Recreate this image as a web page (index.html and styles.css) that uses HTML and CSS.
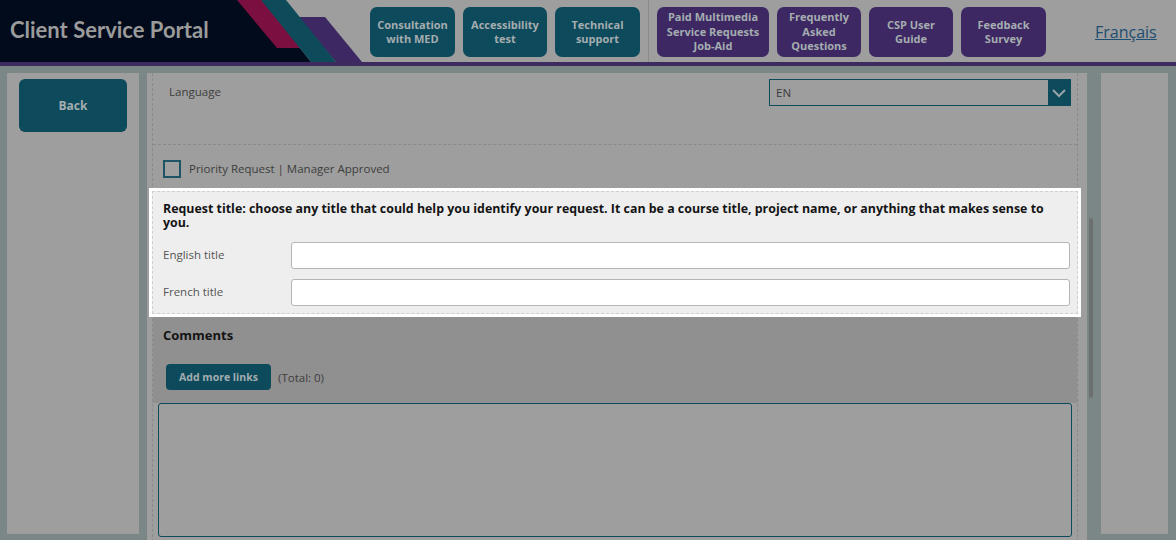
FILE: index.html
```html
<!DOCTYPE html>
<html lang="en">
<head>
<meta charset="utf-8">
<title>Client Service Portal</title>
<link rel="stylesheet" href="styles.css">
</head>
<body>
<header class="topbar">
  <div class="brand">
    <svg class="brand-art" width="370" height="62" viewBox="0 0 370 62" aria-hidden="true">
      <polygon points="0,0 262,0 311,62 0,62" fill="#020b1b"/>
      <polygon points="298,17 325,17 362,62 336,62" fill="#3d2863"/>
      <polygon points="237,0 262,0 300,48 277,48" fill="#7a0f40"/>
      <polygon points="261,0 286,0 336,62 311,62" fill="#0d4a5a"/>
    </svg>
    <span class="brand-title">Client Service Portal</span>
  </div>
  <nav class="nav">
    <div class="nav-group">
      <a class="nav-btn teal w85">Consultation<br>with MED</a>
      <a class="nav-btn teal w84">Accessibility<br>test</a>
      <a class="nav-btn teal w85">Technical<br>support</a>
    </div>
    <div class="nav-divider"></div>
    <div class="nav-group">
      <a class="nav-btn purple w112">Paid Multimedia<br>Service Requests<br>Job-Aid</a>
      <a class="nav-btn purple w84">Frequently<br>Asked<br>Questions</a>
      <a class="nav-btn purple w84">CSP User<br>Guide</a>
      <a class="nav-btn purple w85">Feedback<br>Survey</a>
    </div>
  </nav>
  <a class="lang-link">Français</a>
</header>

<div class="frame">
  <aside class="side-left">
    <button class="back-btn">Back</button>
  </aside>

  <main class="main">
    <div class="form">
      <div class="row-language">
        <span class="lbl">Language</span>
        <div class="select">
          <span class="select-val">EN</span>
          <span class="select-arrow">
            <svg width="22" height="26" viewBox="0 0 22 26"><path d="M5 10 L11 16 L17 10" fill="none" stroke="#9aa4a8" stroke-width="2"/></svg>
          </span>
        </div>
      </div>

      <div class="row-check">
        <span class="checkbox"></span>
        <span class="check-text">Priority Request | Manager Approved</span>
      </div>

      <section class="highlight">
        <p class="hl-title">Request title: choose any title that could help you identify your request. It can be a course title, project name, or anything that makes sense to you.</p>
        <div class="field">
          <span class="field-lbl">English title</span>
          <span class="input"></span>
        </div>
        <div class="field">
          <span class="field-lbl">French title</span>
          <span class="input"></span>
        </div>
      </section>

      <section class="comments">
        <h3 class="comments-title">Comments</h3>
        <div class="links-row">
          <button class="add-btn">Add more links</button>
          <span class="total">(Total: 0)</span>
        </div>
      </section>
      <div class="textarea"></div>
    </div>
  </main>
  <div class="scroll-thumb"></div>

  <aside class="side-right"></aside>
</div>
</body>
</html>
```

FILE: styles.css
```css
* { box-sizing: border-box; }
html, body { margin: 0; padding: 0; }
body {
  width: 1176px;
  height: 540px;
  overflow: hidden;
  background: #7b8686;
  font-family: "Open Sans", "Liberation Sans", sans-serif;
  color: #3a3a3a;
  position: relative;
}

/* header */
.topbar {
  height: 66px;
  background: #9e9e9e;
  border-bottom: 4px solid #3d2a5e;
  display: flex;
  align-items: flex-start;
}
.brand {
  position: relative;
  width: 370px;
  height: 62px;
  flex: none;
}
.brand-art { position: absolute; left: 0; top: 0; }
.brand-title {
  position: absolute;
  left: 10px;
  top: 16px;
  font-family: Lato, "Open Sans", sans-serif;
  font-weight: 700;
  font-size: 22px;
  color: #9b9b9b;
}
.nav {
  display: flex;
  align-items: flex-start;
  height: 62px;
}
.nav-group {
  display: flex;
  gap: 8px;
  padding-top: 7px;
}
.nav-divider {
  width: 1px;
  height: 62px;
  background: #8a8a8a;
  margin: 0 8px 0 8px;
}
.nav-btn {
  height: 50px;
  border-radius: 7px;
  display: flex;
  align-items: center;
  justify-content: center;
  text-align: center;
  font-size: 11px;
  font-weight: 700;
  line-height: 14.5px;
  color: #a5adb0;
}
.nav-btn.teal { background: #0d4a5b; }
.nav-btn.purple { background: #3d2863; }
.w84 { width: 84px; }
.w85 { width: 85px; }
.w112 { width: 112px; }
.lang-link {
  margin-left: 49px;
  margin-top: 21px;
  font-size: 16px;
  color: #1d4d70;
  text-decoration: underline;
}

/* frame */
.frame {
  display: flex;
  padding: 7px 8px 0 7px;
  height: 474px;
  position: relative;
}
.side-left {
  width: 132px;
  height: 461px;
  background: #9e9e9e;
  padding: 6px 12px 0 12px;
  flex: none;
}
.back-btn {
  width: 108px;
  height: 53px;
  border: 0;
  border-radius: 6px;
  background: #0d4a5b;
  color: #a3adb0;
  font-family: "Open Sans", "Liberation Sans", sans-serif;
  font-weight: 700;
  font-size: 12px;
}
.main {
  margin-left: 8px;
  width: 940px;
  height: 474px;
  background: #9e9e9e;
  padding-left: 5px;
  flex: none;
}
.side-right {
  margin-left: 14px;
  width: 67px;
  height: 461px;
  background: #9e9e9e;
  flex: none;
}
.scroll-thumb {
  position: absolute;
  left: 1089px;
  top: 152px;
  width: 4px;
  height: 180px;
  border-radius: 3px;
  background: #6c6f6f;
}

.form {
  width: 926px;
  height: 474px;
  border-left: 1px dashed #8a8a8a;
  border-right: 1px dashed #8a8a8a;
}
.row-language {
  height: 72px;
  display: flex;
  justify-content: space-between;
  align-items: flex-start;
  padding: 6px 6px 0 16px;
  border-bottom: 1px dashed #8a8a8a;
}
.lbl {
  font-size: 11.5px;
  line-height: 26px;
  color: #3d3d3d;
}
.select {
  width: 302px;
  height: 27px;
  border: 1px solid #0d4a5b;
  display: flex;
  justify-content: space-between;
  background: #9e9e9e;
}
.select-val {
  font-size: 11.5px;
  line-height: 25px;
  padding-left: 6px;
  color: #3a3a3a;
}
.select-arrow {
  width: 22px;
  height: 25px;
  background: #0d4a5b;
  display: flex;
  align-items: center;
  justify-content: center;
}
.select-arrow svg { display: block; }

.row-check {
  height: 42px;
  display: flex;
  align-items: flex-start;
  gap: 8px;
  padding: 15px 0 0 10px;
}
.checkbox {
  width: 18px;
  height: 18px;
  border: 2px solid #1e5565;
  background: #a0a0a0;
}
.check-text {
  font-size: 11.5px;
  line-height: 18px;
  color: #3d3d3d;
}

.highlight {
  background: #eeeeee;
  border: 1px dashed #cfcfcf;
  box-shadow: 0 0 0 3px #ffffff;
  margin: 4px -1px 0 -1px;
  padding: 10px 7px 7px 10px;
  position: relative;
}
.hl-title {
  margin: 0;
  font-size: 12.4px;
  font-weight: 700;
  line-height: 14px;
  color: #141414;
}
.field {
  display: flex;
  align-items: center;
  margin-top: 10px;
}
.field:first-of-type { margin-top: 12px; }
.field-lbl {
  width: 128px;
  flex: none;
  font-size: 11.5px;
  line-height: 14px;
  color: #555;
  padding-bottom: 2px;
}
.input {
  flex: 1;
  height: 27px;
  background: #fff;
  border: 1px solid #b5b5b5;
  border-radius: 3px;
}

.comments {
  background: #909090;
  height: 86px;
  padding: 9px 0 0 10px;
  margin-top: 3px;
}
.comments-title {
  margin: 0;
  font-size: 13px;
  font-weight: 700;
  line-height: 18px;
  color: #141414;
}
.links-row {
  display: flex;
  align-items: center;
  gap: 7px;
  margin-top: 20px;
  padding-left: 3px;
}
.add-btn {
  width: 105px;
  height: 26px;
  border: 0;
  border-radius: 4px;
  background: #0d4a5b;
  color: #a3adb0;
  font-family: "Open Sans", "Liberation Sans", sans-serif;
  font-weight: 700;
  font-size: 10.5px;
}
.total {
  font-size: 11.5px;
  color: #3d3d3d;
}
.textarea {
  margin: 0 5px 0 5px;
  height: 134px;
  border: 1px solid #0d4a5b;
  border-radius: 3px;
  background: #9e9e9e;
}
```
